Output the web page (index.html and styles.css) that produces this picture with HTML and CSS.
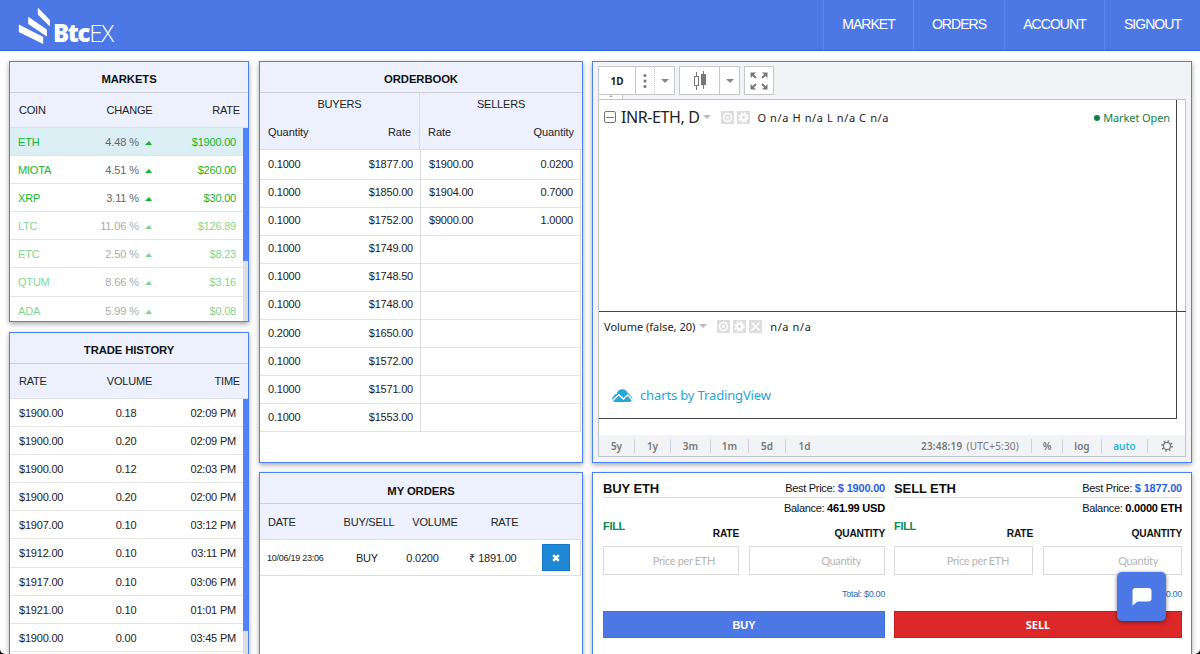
FILE: index.html
```html
<!DOCTYPE html>
<html lang="en">

<head>
  <meta charset="UTF-8" />
  <meta name="viewport" content="width=device-width, initial-scale=1.0" />
  <title>BtcEX</title>
  <link rel="stylesheet" href="styles.css">
</head>

<body>
  <header class="navbar">
    <div class="logo">
      <svg class="logo-mark" width="34" height="38" viewBox="0 0 34 38" fill="#fff">
        <path d="M19.8 0.5 L31.8 13 V19.500 L19.8 7.500 Z" />
        <path d="M10.2 9.8 L28.8 22.500 V29.500 L10.2 17 Z" />
        <path d="M0.8 17.5 L25.2 30 V37 L0.8 25 Z" />
      </svg>
      <span class="logo-text"><b>Btc</b>EX</span>
    </div>
    <nav class="menu">
      <a class="menu-market">MARKET</a>
      <a class="menu-orders">ORDERS</a>
      <a class="menu-account">ACCOUNT</a>
      <a class="menu-signout">SIGNOUT</a>
    </nav>
  </header>

  <main class="container">
    <div class="column first">
      <section class="panel markets">
        <h2>MARKETS</h2>
        <div class="head"><span>COIN</span><span>CHANGE</span><span>RATE</span></div>
        <div class="scroll">
          <div class="rows" id="markets-rows"></div>
          <div class="scrollbar"><div class="thumb"></div></div>
        </div>
      </section>

      <section class="panel history">
        <h2>TRADE HISTORY</h2>
        <div class="head"><span>RATE</span><span>VOLUME</span><span>TIME</span></div>
        <div class="scroll">
          <div class="rows" id="history-rows"></div>
          <div class="scrollbar"><div class="thumb"></div></div>
        </div>
      </section>
    </div>

    <div class="column">
      <section class="panel orderbook">
        <h2>ORDERBOOK</h2>
        <div class="book-head">
          <div class="side">
            <p>BUYERS</p>
            <div><span>Quantity</span><span>Rate</span></div>
          </div>
          <div class="side">
            <p>SELLERS</p>
            <div><span>Rate</span><span>Quantity</span></div>
          </div>
        </div>
        <div id="book-rows"></div>
      </section>

      <section class="panel orders">
        <h2>MY ORDERS</h2>
        <div class="order-head"><span>DATE</span><span>BUY/SELL</span><span>VOLUME</span><span>RATE</span><span></span></div>
        <div class="order-row">
          <span class="date">10/06/19 23:06</span><span>BUY</span><span>0.0200</span><span>₹ 1891.00</span>
          <button class="cancel">
            <svg width="8" height="8" viewBox="0 0 8 8"><path d="M1.2 1.2 L6.8 6.8 M6.8 1.2 L1.2 6.8" stroke="#fff" stroke-width="2.4" /></svg>
          </button>
        </div>
      </section>
    </div>

    <div class="column">
      <section class="panel chart">
        <div class="toolbar">
          <div class="group">
            <span class="tool interval">1D</span>
            <span class="tool dots">
              <svg width="4" height="16" viewBox="0 0 4 16" fill="#777"><circle cx="2" cy="2.5" r="1.5" /><circle cx="2" cy="8" r="1.5" /><circle cx="2" cy="13.5" r="1.5" /></svg>
            </span>
            <span class="tool arrow"><i class="caret"></i></span>
          </div>
          <div class="group">
            <span class="tool candles">
              <svg width="14" height="20" viewBox="0 0 14 20">
                <path d="M3.5 1 V19" stroke="#777" />
                <rect x="1.5" y="5.5" width="4" height="9" fill="#fff" stroke="#777" />
                <path d="M10.5 0 V18" stroke="#777" />
                <rect x="8" y="3" width="5" height="11" fill="#777" />
              </svg>
            </span>
            <span class="tool arrow-wide"><i class="caret"></i></span>
          </div>
          <div class="group">
            <span class="tool expand">
              <svg width="18" height="18" viewBox="0 0 18 18" fill="#777" stroke="#777" stroke-width="1.8">
                <path d="M2 2 L6 6 M16 2 L12 6 M2 16 L6 12 M16 16 L12 12" />
                <path d="M0.5 0.5 H6 L0.5 6 Z M17.5 0.5 H12 L17.5 6 Z M0.5 17.5 H6 L0.5 12 Z M17.5 17.5 H12 L17.5 12 Z" stroke="none" />
              </svg>
            </span>
          </div>
        </div>
        <div class="handle"><i></i></div>

        <div class="plot">
          <div class="panes">
            <div class="pane price">
              <span class="collapse"></span>
              <span class="symbol">INR-ETH, D</span>
              <i class="caret light"></i>
              <svg class="tiny" width="29" height="13" viewBox="0 0 29 13">
                <rect width="13" height="13" fill="#ddd" /><rect x="16" width="13" height="13" fill="#ddd" />
                <g fill="none" stroke="#fff">
                  <circle cx="6.5" cy="6.5" r="4" stroke-width="1.6" /><circle cx="6.5" cy="6.5" r="1" stroke-width="1.2" />
                  <circle cx="22.5" cy="6.5" r="2.7" stroke-width="2" /><circle cx="22.5" cy="6.5" r="4.4" stroke-width="1.8" stroke-dasharray="1.9 1.556" />
                </g>
              </svg>
              <span class="values">O n/a H n/a L n/a C n/a</span>
              <span class="market-open">Market Open</span>
            </div>
            <div class="pane volume">
              <div class="study">
                <span>Volume (false, 20)</span>
                <i class="caret light"></i>
                <svg class="tiny" width="45" height="13" viewBox="0 0 45 13">
                  <rect width="13" height="13" fill="#ddd" /><rect x="16" width="13" height="13" fill="#ddd" /><rect x="32" width="13" height="13" fill="#ddd" />
                  <g fill="none" stroke="#fff">
                    <circle cx="6.5" cy="6.5" r="4" stroke-width="1.6" /><circle cx="6.5" cy="6.5" r="1" stroke-width="1.2" />
                    <circle cx="22.5" cy="6.5" r="2.7" stroke-width="2" /><circle cx="22.5" cy="6.5" r="4.4" stroke-width="1.8" stroke-dasharray="1.9 1.556" />
                    <path d="M34.5 2.5 L42.5 10.5 M42.5 2.5 L34.5 10.5" stroke-width="1.7" />
                  </g>
                </svg>
                <span class="na">n/a n/a</span>
              </div>
              <div class="credit">
                <svg width="21" height="13" viewBox="0 0 21 13">
                  <path d="M3 13 A3.2 3.2 0 0 1 1.6 7.2 C2.2 5.5 3.6 5 4.6 5 C5.5 1.5 8 0.3 10.3 0.3 C12.8 0.3 14.6 1.6 15.7 4 C17.5 4.5 18.2 5.8 18.6 7.3 A3 3 0 0 1 18 13 Z" fill="#26a6da" />
                  <path d="M0.5 11.5 L6.8 5.8 L11.5 10 L15.8 5.8 L20.5 11.5" fill="none" stroke="#fff" stroke-width="1.5" />
                </svg>
                <span>charts by TradingView</span>
              </div>
            </div>
          </div>
          <div class="statusbar">
            <span class="r1">5y</span><span class="r2">1y</span><span class="r3">3m</span><span class="r4">1m</span><span class="r5">5d</span><span class="r6">1d</span>
            <span class="clock">23:48:19 <em>(UTC+5:30)</em></span>
            <span class="percent">%</span><span class="log">log</span><span class="auto">auto</span>
            <span class="gear">
              <svg width="12" height="12" viewBox="0 0 12 12" fill="none" stroke="#777"><circle cx="6" cy="6" r="3.5" stroke-width="1.2" /><circle cx="6" cy="6" r="4.9" stroke-width="1.8" stroke-dasharray="1.5 2.348" /></svg>
            </span>
          </div>
        </div>
      </section>

      <section class="panel trade">
        <div class="form buy">
          <div class="form-title"><h3>BUY ETH</h3><span>Best Price: <b class="price-value">$ 1900.00</b></span></div>
          <div class="balance">Balance: <b>461.99 USD</b></div>
          <div class="fill">FILL</div>
          <div class="fields">
            <label>RATE<input type="text" placeholder="Price per ETH"></label>
            <label>QUANTITY<input type="text" placeholder="Quantity"></label>
          </div>
          <div class="total">Total: $0.00</div>
          <button class="btn">BUY</button>
        </div>
        <div class="form sell">
          <div class="form-title"><h3>SELL ETH</h3><span>Best Price: <b class="price-value">$ 1877.00</b></span></div>
          <div class="balance">Balance: <b>0.0000 ETH</b></div>
          <div class="fill">FILL</div>
          <div class="fields">
            <label>RATE<input type="text" placeholder="Price per ETH"></label>
            <label>QUANTITY<input type="text" placeholder="Quantity"></label>
          </div>
          <div class="total">Total: $0.00</div>
          <button class="btn">SELL</button>
        </div>
      </section>
    </div>
  </main>

  <button class="chat">
    <svg width="20" height="18" viewBox="0 0 20 18"><path d="M3.5 0 H16.5 A3 3 0 0 1 19.5 3 V10.5 A3 3 0 0 1 16.5 13.5 H5.5 L0.5 17.5 V3 A3 3 0 0 1 3.5 0 Z" fill="#fff" /></svg>
  </button>

  <script src="script.js"></script>
</body>

</html>
```
FILE: styles.css
```css
* {
  box-sizing: border-box;
}

html {
  background-color: #000;
}

body {
  margin: 0;
  height: 654px;
  overflow: hidden;
  display: flex;
  flex-direction: column;
  background-color: #fff;
  border-radius: 0 0 5px 5px;
  font-family: "Liberation Sans", Arial, sans-serif;
  font-size: 11px;
  letter-spacing: -0.2px;
  color: #222;
}

h2,
h3,
p {
  margin: 0;
}

/* Top bar */
.navbar {
  display: flex;
  justify-content: space-between;
  height: 51px;
  flex: none;
  background-color: #4c78e6;
  border-bottom: 1px solid #2c62dc;
}

.logo {
  display: flex;
  padding: 7px 0 0 18px;
}

.logo-text {
  font-family: "Open Sans", sans-serif;
  font-size: 24px;
  font-weight: 300;
  line-height: 28px;
  letter-spacing: -1.3px;
  color: #fff;
  padding: 12px 0 0 1px;
}

.logo-text b {
  font-weight: 800;
}

.menu {
  display: flex;
}

.menu a {
  border-left: 1px solid #5c88f6;
  color: #fff;
  font-size: 14px;
  letter-spacing: -0.95px;
  line-height: 49px;
  text-align: center;
}

.menu-market {
  width: 90px;
}

.menu-orders {
  width: 91px;
}

.menu-account {
  width: 100px;
}

.menu-signout {
  width: 96px;
}

/* Panels */
.container {
  display: grid;
  grid-template-columns: 240px 324px 600px;
  column-gap: 10px;
  padding: 10px 0 0 9px;
  height: 615px;
}

.column {
  display: flex;
  flex-direction: column;
  gap: 9px;
}

.column.first {
  gap: 10px;
}

.column:last-child {
  margin: 0 1px 0 -1px;
  width: 600px;
}

.panel {
  border: 1px solid #4a80fc;
  box-shadow: 0 2px 5px rgba(0, 0, 0, 0.35);
  background-color: #fff;
  overflow: hidden;
}

.panel h2 {
  height: 31px;
  background-color: #edf1fe;
  border-bottom: 1px solid #ccced6;
  color: #111;
  font-size: 11.3px;
  letter-spacing: -0.1px;
  line-height: 34px;
  text-align: center;
}

.markets {
  height: 261px;
}

.history,
.orders,
.trade {
  flex: 1;
}

.orderbook,
.chart {
  height: 402px;
}

.orders h2 {
  line-height: 36px;
}

.head {
  display: grid;
  grid-template-columns: 1fr 60px 1fr;
  height: 35px;
  padding: 0 8px 0 9px;
  background-color: #edf1fe;
  border-bottom: 1px solid #dbdfea;
  line-height: 35px;
}

.head span:nth-child(2) {
  text-align: center;
}

.head span:nth-child(3) {
  text-align: right;
}

.scroll {
  display: flex;
}

.markets .scroll {
  height: 195px;
}

.history .scroll {
  height: 270px;
}

.rows {
  flex: 1;
}

.scrollbar {
  width: 5px;
  background-color: #dedede;
}

.thumb {
  background-color: #4f82fc;
  height: 133px;
}

.history .thumb {
  height: 232px;
}

.row {
  display: grid;
  height: 28.1px;
  border-bottom: 1px solid #e4e4e4;
  line-height: 28.6px;
}

.markets .row {
  grid-template-columns: 50px 71px 20px 1fr;
  padding: 0 7px 0 8px;
  color: #12b52c;
}

.markets .row span:nth-child(2) {
  color: #666;
  text-align: right;
  letter-spacing: -0.1px;
}

.markets .row span:last-child,
.history .row span:last-child {
  text-align: right;
}

.markets .selected {
  background-color: #daeef4;
}

.markets .faded span,
.markets .faded i {
  opacity: 0.55;
}

.up {
  width: 0;
  height: 0;
  margin: 13px 0 0 6px;
  border: 3.5px solid transparent;
  border-left-width: 4px;
  border-top: 0;
  border-bottom: 4px solid #12b52c;
}

.history .row {
  grid-template-columns: 78px 76px 1fr;
  padding: 0 7px 0 9px;
}

.history .row span:nth-child(2) {
  padding-right: 18px;
  text-align: center;
}

/* Order book */
.book-head {
  display: grid;
  grid-template-columns: 160px 1fr;
  height: 57px;
  background-color: #edf1fe;
  border-bottom: 1px solid #dbdfea;
}

.side {
  padding: 0 8px;
  line-height: 22px;
}

.side:first-child {
  border-right: 1px solid #d6dae6;
}

.side p {
  height: 28px;
  text-align: center;
}

.side div {
  display: flex;
  justify-content: space-between;
  letter-spacing: -0.05px;
}

.book-row {
  display: grid;
  grid-template-columns: 161px 160px;
  height: 28.1px;
  line-height: 28.6px;
}

.book-row div {
  display: flex;
  justify-content: space-between;
  padding: 0 7px 0 8px;
  border-right: 1px solid #ddd;
  border-bottom: 1px solid #e2e2e2;
}

/* My orders */
.order-head,
.order-row {
  display: grid;
  align-items: center;
}

.order-head {
  grid-template-columns: 67px 68px 64px 75px 1fr;
  height: 35px;
  padding-left: 8px;
  background-color: #edf1fe;
}

.order-head span:not(:first-child) {
  text-align: center;
}

.order-row {
  grid-template-columns: 73px 54px 57px 84px 1fr;
  width: 321px;
  height: 37px;
  padding-left: 7px;
  border: 1px solid #ddd;
  border-left: 0;
  text-align: center;
}

.order-row .date {
  font-size: 9px;
  letter-spacing: -0.25px;
  text-align: left;
}

.cancel {
  width: 28px;
  height: 27px;
  margin-left: 7px;
  padding: 0;
  border: 1px solid #1279c6;
  background-color: #1f87d3;
}

.cancel svg {
  display: block;
  margin: auto;
}

/* Chart */
.chart {
  display: flex;
  flex-direction: column;
  padding: 4px 5px 5px;
  background-color: #f1f3f6;
  font-family: "Noto Sans", sans-serif;
  letter-spacing: 0;
}

.toolbar {
  display: flex;
  gap: 4px;
  height: 29px;
}

.group {
  display: flex;
  border: 1px solid #c4c7cb;
  background-color: #fff;
}

.tool {
  display: flex;
  align-items: center;
  justify-content: center;
}

.interval {
  width: 37px;
  border-right: 1px solid #c4c7cb;
  font-size: 10px;
  font-weight: 700;
}

.dots {
  width: 19px;
  border-right: 1px dotted #c4c7cb;
}

.arrow {
  width: 19px;
}

.candles {
  width: 40px;
  border-right: 1px solid #c4c7cb;
}

.arrow-wide {
  width: 19px;
}

.expand {
  width: 28px;
}

.caret {
  width: 0;
  height: 0;
  border: 4px solid transparent;
  border-bottom: 0;
  border-top-color: #888;
}

.caret.light {
  border-top-color: #bbb;
}

.handle {
  width: 25px;
  height: 4px;
  border: 1px solid #c4c7cb;
  border-width: 0 1px;
  background-color: #fff;
}

.handle i {
  display: block;
  width: 0;
  margin: 0 auto;
  border: 2.5px solid transparent;
  border-top: 0;
  border-bottom-color: #aaa;
}

.plot {
  display: flex;
  flex-direction: column;
  flex: 1;
  border: 1px solid #c0c3ca;
  background-color: #fff;
}

.panes {
  width: 578px;
  flex: none;
  border-right: 1px solid #444;
  border-bottom: 1px solid #444;
}

.price {
  display: flex;
  align-items: center;
  height: 211px;
  padding: 0 6px 177px 5px;
}

.collapse {
  display: flex;
  align-items: center;
  justify-content: center;
  width: 12px;
  height: 12px;
  border: 1px solid #777;
  border-radius: 2px;
}

.collapse::before {
  content: "";
  width: 8px;
  height: 1px;
  background-color: #777;
}

.symbol {
  font-size: 16px;
  letter-spacing: -0.4px;
  margin-left: 5px;
  margin-right: 4px;
}

.price .tiny {
  margin: 0 7px 0 10px;
}

.values {
  font-size: 11px;
  letter-spacing: 0.6px;
}

.market-open {
  margin-left: auto;
  color: #12803f;
  font-size: 11px;
  letter-spacing: -0.1px;
}

.market-open::before {
  content: "";
  display: inline-block;
  width: 6px;
  height: 6px;
  margin-right: 3px;
  border-radius: 50%;
  background-color: #12803f;
  vertical-align: 1px;
}

.volume {
  height: 107px;
  /* the separator continues over the price scale */
  width: 587px;
  border-top: 1px solid #444;
}

.study {
  display: flex;
  align-items: center;
  height: 28px;
  padding-left: 5px;
}

.study .caret {
  margin-left: 4px;
}

.study .tiny {
  margin: 0 8px 0 10px;
}

.study .na {
  letter-spacing: 0.6px;
}

.credit {
  display: flex;
  align-items: center;
  gap: 7px;
  margin-top: 46px;
  padding-left: 13px;
  color: #26a6da;
  font-size: 13px;
  letter-spacing: -0.14px;
  line-height: 18px;
}

.statusbar {
  display: flex;
  align-items: center;
  height: 21px;
  margin-top: auto;
  background-color: #f1f3f6;
  color: #777;
  font-size: 10px;
  font-weight: 600;
}

.statusbar span {
  display: flex;
  align-items: center;
  justify-content: center;
  height: 14px;
  border-right: 1px solid #cfd2d8;
}

.statusbar em {
  font-style: normal;
  font-weight: 400;
  margin-left: 4px;
}

.statusbar .r1,
.statusbar .r2 {
  width: 36px;
}

.statusbar .r3 {
  width: 40px;
}

.statusbar .r4 {
  width: 38px;
}

.statusbar .r5 {
  width: 37px;
}

.statusbar .r6 {
  width: 37px;
  border: none;
}

.statusbar .clock {
  margin-left: auto;
  padding-right: 12px;
  letter-spacing: 0.2px;
}

.statusbar .percent {
  width: 31px;
}

.statusbar .log {
  width: 39px;
}

.statusbar .auto {
  width: 46px;
  color: #30b4dc;
}

.statusbar .gear {
  width: 37px;
  border: none;
}

/* Buy and sell forms */
.trade {
  display: grid;
  grid-template-columns: 282px 288px;
  align-content: start;
  gap: 9px;
  padding: 6px 9px 0 10px;
}

.form {
  display: flex;
  flex-direction: column;
  color: #111;
  letter-spacing: -0.3px;
}

.form b {
  color: #000;
  letter-spacing: -0.2px;
}

.form-title {
  display: flex;
  justify-content: space-between;
  height: 19px;
  border-bottom: 1px solid #ddd;
  line-height: 19px;
}

.form-title h3 {
  font-size: 13px;
  letter-spacing: -0.1px;
}

.form .price-value {
  color: #2a5fe0;
}

.balance {
  line-height: 20px;
  text-align: right;
}

.fill {
  height: 9px;
  line-height: 16px;
  color: #0a8a55;
  font-weight: bold;
}

.fields {
  display: flex;
  gap: 10px;
}

.fields label {
  flex: 1;
  font-weight: bold;
  font-size: 10.2px;
  letter-spacing: -0.2px;
  line-height: 13px;
  text-align: right;
}

.fields input {
  display: block;
  width: 100%;
  height: 29px;
  margin-top: 6px;
  padding: 0 23px 0 0;
  border: 1px solid #d8d8d8;
  font-family: Lato, sans-serif;
  font-size: 11px;
  letter-spacing: -0.35px;
  text-align: right;
}

.fields input::placeholder {
  color: #b5b5b5;
}

.total {
  height: 36px;
  padding-top: 12px;
  color: #2270c0;
  font-size: 9px;
  line-height: 14px;
  text-align: right;
}

.btn {
  height: 27px;
  padding: 0;
  border: 1px solid #4070df;
  background-color: #4c78e6;
  color: #fff;
  font-family: inherit;
  font-size: 11px;
  font-weight: bold;
}

.sell .btn {
  border-color: #c81a20;
  background-color: #dc2829;
  font-family: "Noto Sans", sans-serif;
}

/* Chat bubble over the page */
.chat {
  position: absolute;
  right: 34px;
  bottom: 33px;
  width: 49px;
  height: 49px;
  padding: 0;
  border: none;
  border-radius: 5px;
  background-color: #4c78e6;
  box-shadow: 0 1px 4px rgba(0, 0, 0, 0.5);
}

.chat svg {
  display: block;
  margin: 0 auto;
}
```
FILE: script.js
```js
const markets = [
  ["ETH", "4.48 %", "$1900.00", "selected"],
  ["MIOTA", "4.51 %", "$260.00", ""],
  ["XRP", "3.11 %", "$30.00", ""],
  ["LTC", "11.06 %", "$126.89", "faded"],
  ["ETC", "2.50 %", "$8.23", "faded"],
  ["QTUM", "8.66 %", "$3.16", "faded"],
  ["ADA", "5.99 %", "$0.08", "faded"]
];

const trades = [
  ["$1900.00", "0.18", "02:09 PM"],
  ["$1900.00", "0.20", "02:09 PM"],
  ["$1900.00", "0.12", "02:03 PM"],
  ["$1900.00", "0.20", "02:00 PM"],
  ["$1907.00", "0.10", "03:12 PM"],
  ["$1912.00", "0.10", "03:11 PM"],
  ["$1917.00", "0.10", "03:06 PM"],
  ["$1921.00", "0.10", "01:01 PM"],
  ["$1900.00", "0.00", "03:45 PM"]
];

// buy quantity, buy rate, sell rate, sell quantity
const book = [
  ["0.1000", "$1877.00", "$1900.00", "0.0200"],
  ["0.1000", "$1850.00", "$1904.00", "0.7000"],
  ["0.1000", "$1752.00", "$9000.00", "1.0000"],
  ["0.1000", "$1749.00", "", ""],
  ["0.1000", "$1748.50", "", ""],
  ["0.1000", "$1748.00", "", ""],
  ["0.2000", "$1650.00", "", ""],
  ["0.1000", "$1572.00", "", ""],
  ["0.1000", "$1571.00", "", ""],
  ["0.1000", "$1553.00", "", ""]
];

document.getElementById("markets-rows").innerHTML = markets.map(m =>
  `<div class="row ${m[3]}"><span>${m[0]}</span><span>${m[1]}</span><i class="up"></i><span>${m[2]}</span></div>`
).join("");

document.getElementById("history-rows").innerHTML = trades.map(t =>
  `<div class="row"><span>${t[0]}</span><span>${t[1]}</span><span>${t[2]}</span></div>`
).join("");

document.getElementById("book-rows").innerHTML = book.map(b =>
  `<div class="book-row"><div><span>${b[0]}</span><span>${b[1]}</span></div><div><span>${b[2]}</span><span>${b[3]}</span></div></div>`
).join("");
```
